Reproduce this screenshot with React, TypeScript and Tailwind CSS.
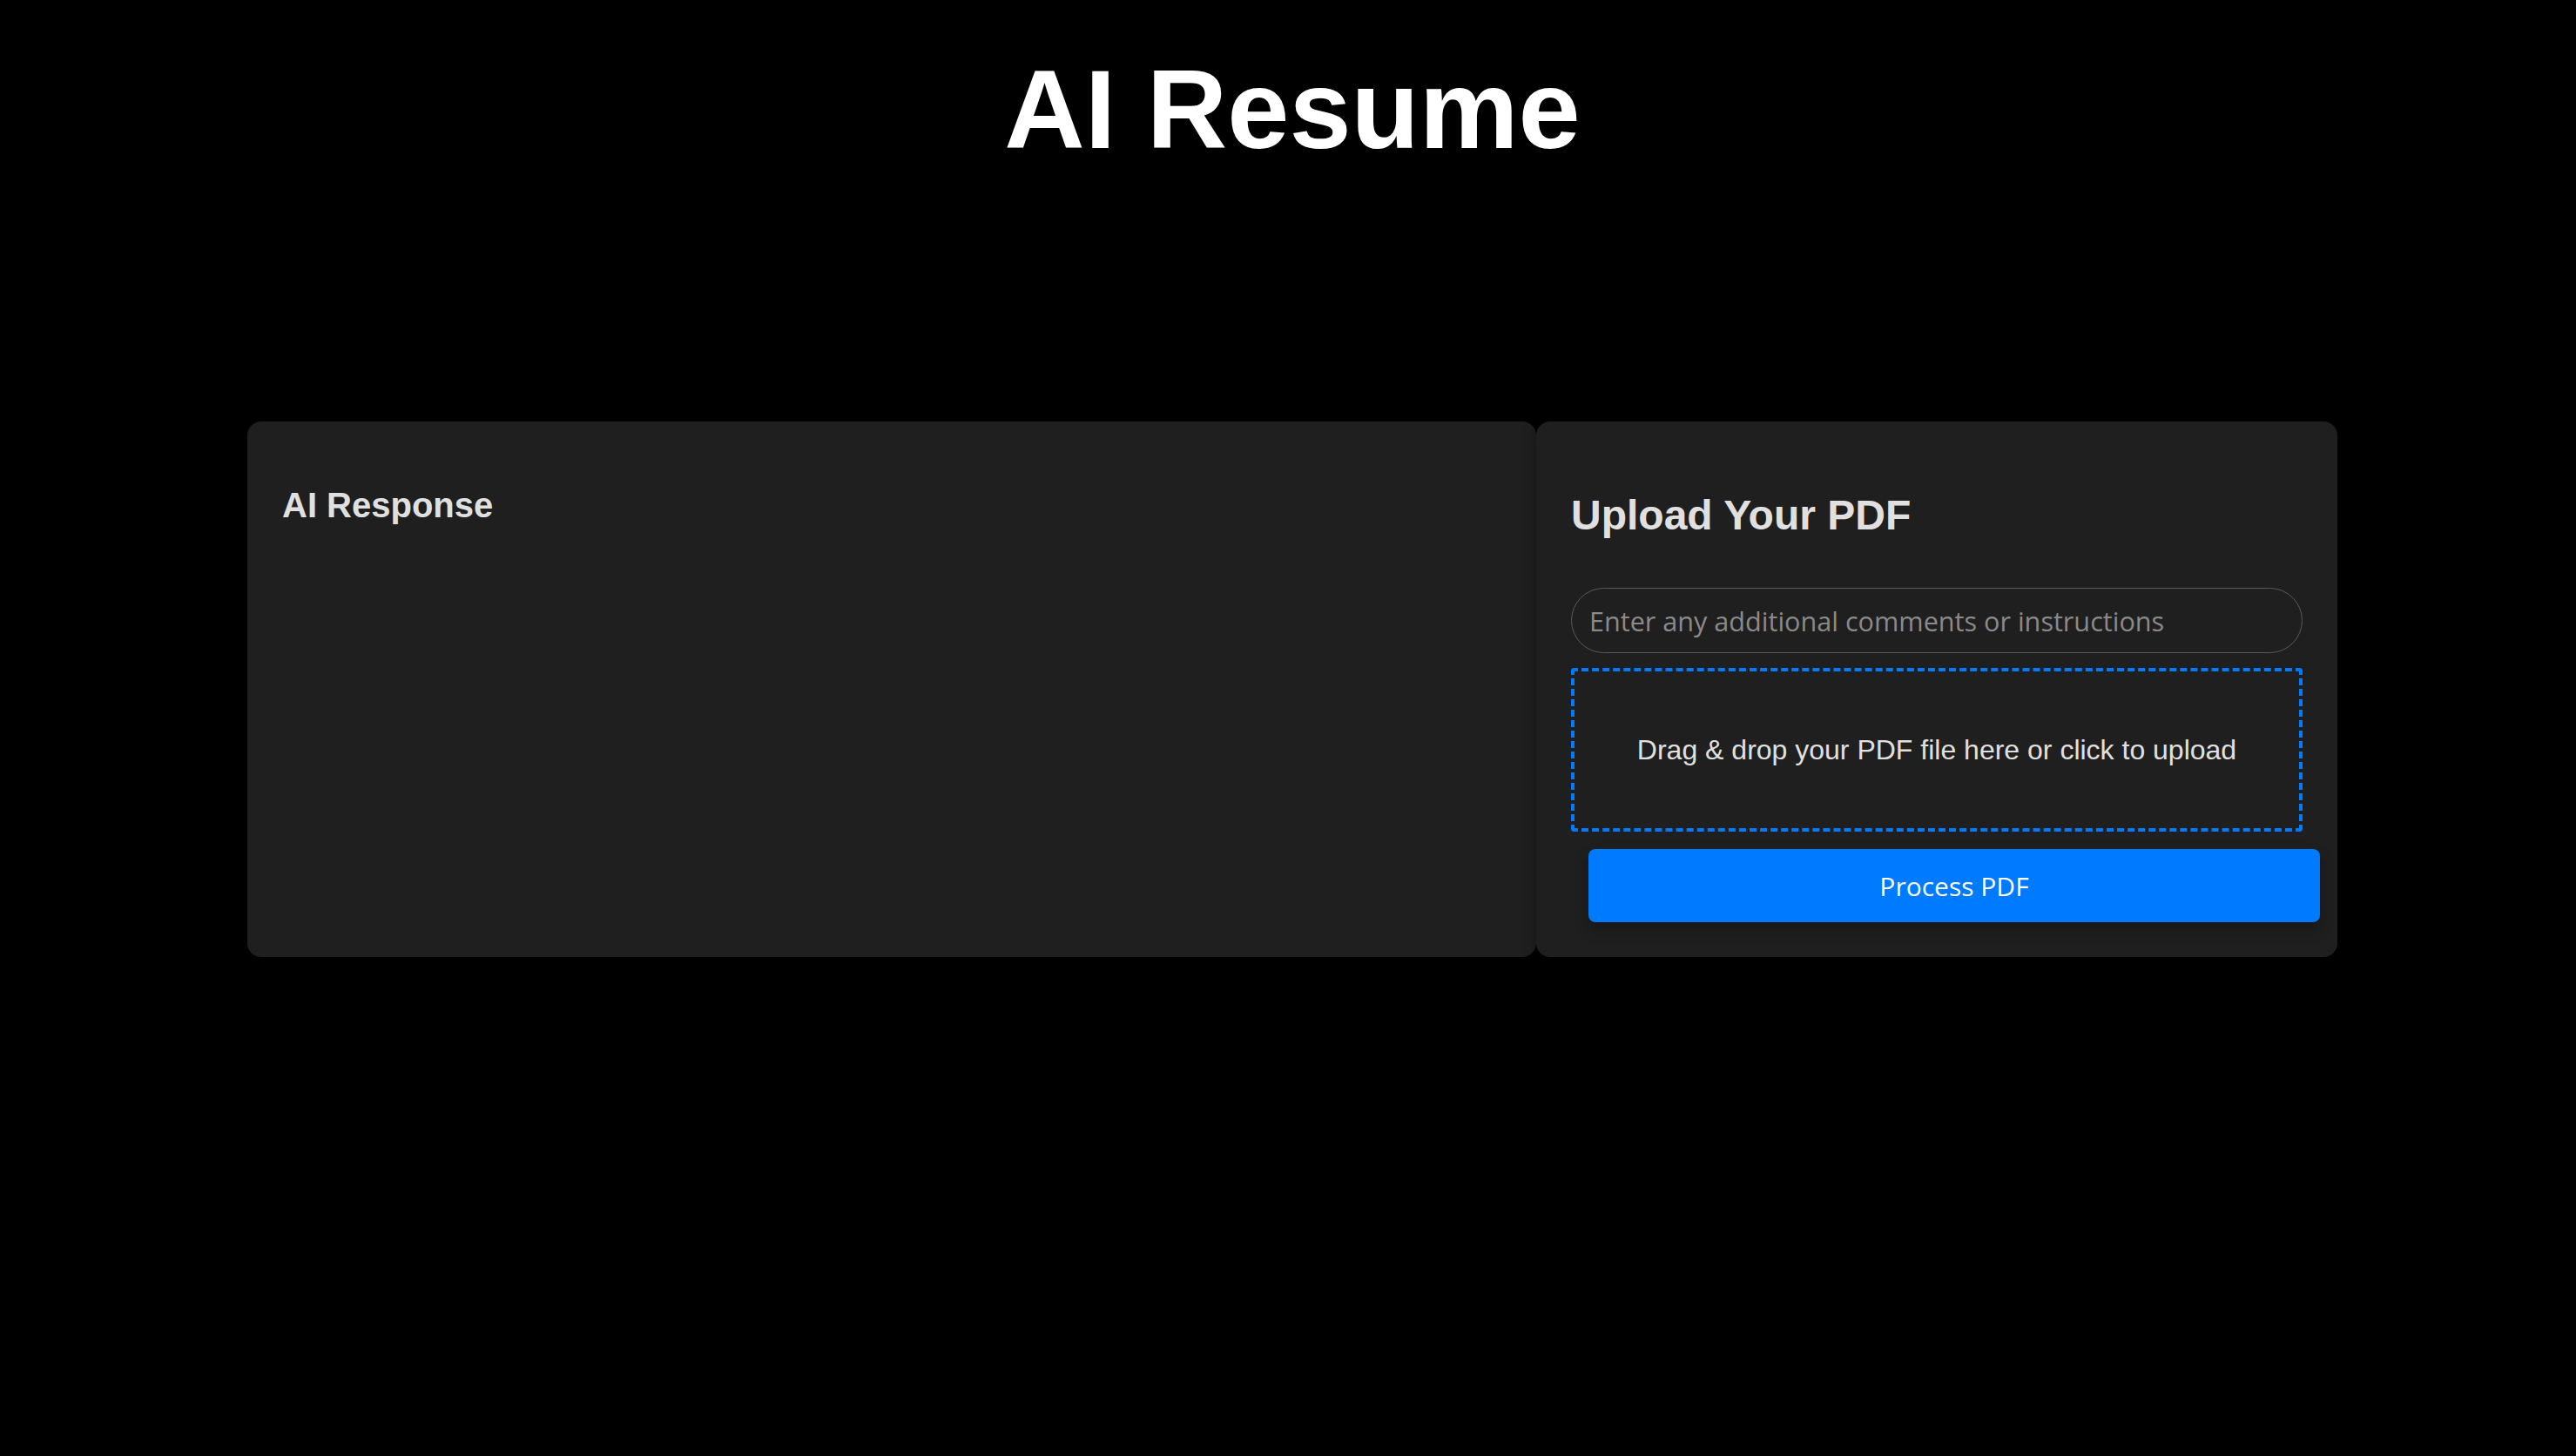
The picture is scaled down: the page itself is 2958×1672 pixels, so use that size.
import React from "react";

export default function App() {
  return (
    <div className="min-h-[1672px] w-full bg-black pl-[10px]" style={{ fontFamily: '"Liberation Sans", Arial, sans-serif' }}>
      <div className="flex flex-col items-center pt-[62px]">
        <h1 className="text-[128px] font-bold leading-none text-white">AI Resume</h1>
        <div className="mt-[294px] flex w-[2400px]">
          <div className="h-[615px] w-[1480px] rounded-[16px] bg-[#1f1f1f] px-[40px] pt-[76px] shadow-[0_4px_16px_rgba(0,0,0,0.35)]">
            <h3 className="text-[40px] font-bold leading-none text-[#e0e0e0]">AI Response</h3>
          </div>
          <div className="relative h-[615px] w-[920px] rounded-[16px] bg-[#1f1f1f] px-[40px] pt-[84px] shadow-[0_4px_16px_rgba(0,0,0,0.35)]">
            <h2 className="text-[48px] font-bold leading-none text-[#e0e0e0]">Upload Your PDF</h2>
            <input
              type="text"
              placeholder="Enter any additional comments or instructions"
              className="mt-[59px] box-border h-[75px] w-[840px] rounded-full border border-[#5a5a5a] bg-transparent px-[20px] text-[30.6px] text-[#e0e0e0] outline-none placeholder:text-[#8a8a8a]"
              style={{ fontFamily: '"Open Sans", "Noto Sans", sans-serif' }}
            />
            <div className="mt-[17px] box-border flex h-[188px] w-[840px] items-center justify-center rounded-[4px] border-4 border-dashed border-[#007bff]">
              <span className="text-[32px] text-[#e0e0e0]">Drag &amp; drop your PDF file here or click to upload</span>
            </div>
            <button
              className="ml-[20px] mt-[20px] flex h-[84px] w-[840px] items-center justify-center rounded-[8px] bg-[#007bff] text-[30px] text-white shadow-[0_8px_16px_rgba(0,0,0,0.3)]"
              style={{ fontFamily: '"Open Sans", "Noto Sans", sans-serif' }}
            >
              Process PDF
            </button>
          </div>
        </div>
      </div>
    </div>
  );
}
